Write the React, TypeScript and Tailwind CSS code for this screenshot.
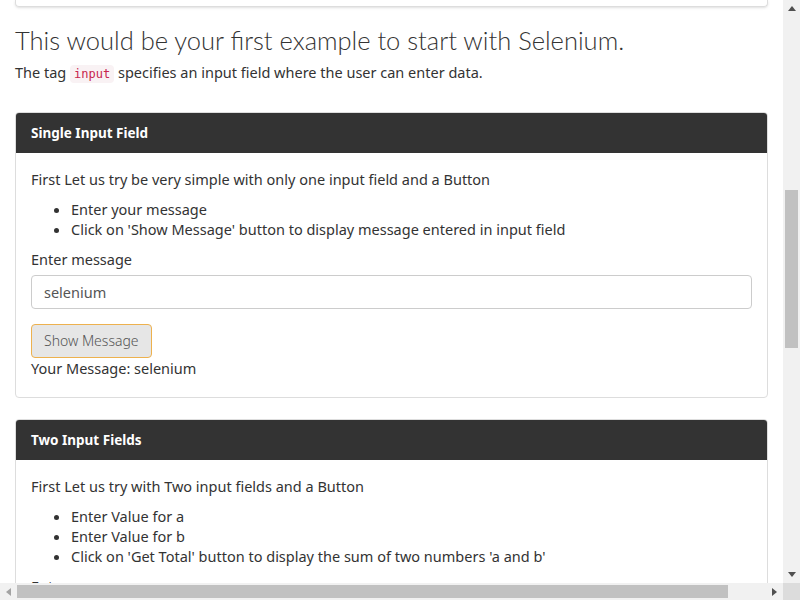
const bodyFont = "font-['Noto_Sans',sans-serif]";

function Card({ title, children }: { title: string; children: React.ReactNode }) {
  return (
    <div className="mb-[21px] rounded border border-[#ddd] bg-white">
      <div className="rounded-t-[3px] bg-[#333] px-[15px] py-[10px] text-[13.5px] font-bold leading-5 text-white">
        {title}
      </div>
      <div className="px-[15px] pt-[16px] pb-[19px]">{children}</div>
    </div>
  );
}

function Arrow({ dir, light }: { dir: 'up' | 'down' | 'left' | 'right'; light?: boolean }) {
  const points = {
    up: '4,1 8,6 0,6',
    down: '0,1 8,1 4,6',
    left: '6,0 6,8 1,4',
    right: '1,0 1,8 6,4',
  }[dir];
  const vertical = dir === 'up' || dir === 'down';
  return (
    <svg width={vertical ? 8 : 7} height={vertical ? 7 : 8} viewBox={vertical ? '0 0 8 7' : '0 0 7 8'}>
      <polygon points={points} fill={light ? '#a3a3a3' : '#505050'} />
    </svg>
  );
}

export default function App() {
  return (
    <div className={`flex h-[600px] w-[800px] flex-col bg-white text-[14.5px] leading-5 text-[#333] ${bodyFont}`}>
      <div className="flex h-[583px]">
        {/* page content */}
        <div className="w-[783px] overflow-hidden px-[15px]">
          <div className="h-[7px] rounded-b border border-t-0 border-[#ddd] shadow-sm" />

          <h3 className="mt-[19px] mb-2 font-['Lato',sans-serif] text-[25.5px] leading-[1.1] font-light text-[#333]">
            This would be your first example to start with Selenium.
          </h3>
          <p className="mb-[28px]">
            The tag{' '}
            <code className="rounded bg-[#f9f2f4] px-1 py-[2px] font-['DejaVu_Sans_Mono',monospace] text-[12px] text-[#c7254e]">
              input
            </code>{' '}
            specifies an input field where the user can enter data.
          </p>

          <Card title="Single Input Field">
            <p className="mb-[10px]">First Let us try be very simple with only one input field and a Button</p>
            <ul className="mb-[10px] list-disc pl-10">
              <li>Enter your message</li>
              <li>Click on 'Show Message' button to display message entered in input field</li>
            </ul>
            <label className="mb-[6px] block">Enter message</label>
            <input
              readOnly
              value="selenium"
              className="block h-[34px] w-full rounded border border-[#ccc] px-3 text-[14.5px] text-[#555] outline-none"
            />
            <button className="mt-[15px] h-[34px] rounded border border-[#edb14e] bg-[#e6e6e6] px-3 text-[14px] font-light text-[#555]">
              Show Message
            </button>
            <div>Your Message: selenium</div>
          </Card>

          <Card title="Two Input Fields">
            <p className="mb-[10px]">First Let us try with Two input fields and a Button</p>
            <ul className="mb-[10px] list-disc pl-10">
              <li>Enter Value for a</li>
              <li>Enter Value for b</li>
              <li>Click on 'Get Total' button to display the sum of two numbers 'a and b'</li>
            </ul>
            <label className="mb-[6px] block">Enter a</label>
            <input className="block h-[34px] w-full rounded border border-[#ccc] px-3" />
          </Card>
        </div>

        {/* vertical scrollbar */}
        <div className="flex w-[17px] flex-col items-center bg-[#f1f1f1]">
          <div className="flex h-[17px] items-center justify-center">
            <Arrow dir="up" />
          </div>
          <div className="flex-1 px-[2px] pt-[173px]">
            <div className="h-[158px] w-[13px] bg-[#c1c1c1]" />
          </div>
          <div className="flex h-[17px] items-center justify-center">
            <Arrow dir="down" />
          </div>
        </div>
      </div>

      {/* horizontal scrollbar */}
      <div className="flex h-[17px]">
        <div className="flex w-[783px] items-center bg-[#f1f1f1]">
          <div className="flex w-[17px] justify-center">
            <Arrow dir="left" light />
          </div>
          <div className="flex flex-1 items-center py-[2px]">
            <div className="h-[13px] w-[711px] bg-[#c1c1c1]" />
          </div>
          <div className="flex w-[17px] justify-center">
            <Arrow dir="right" />
          </div>
        </div>
        <div className="w-[17px] bg-[#dcdcdc]" />
      </div>
    </div>
  );
}
